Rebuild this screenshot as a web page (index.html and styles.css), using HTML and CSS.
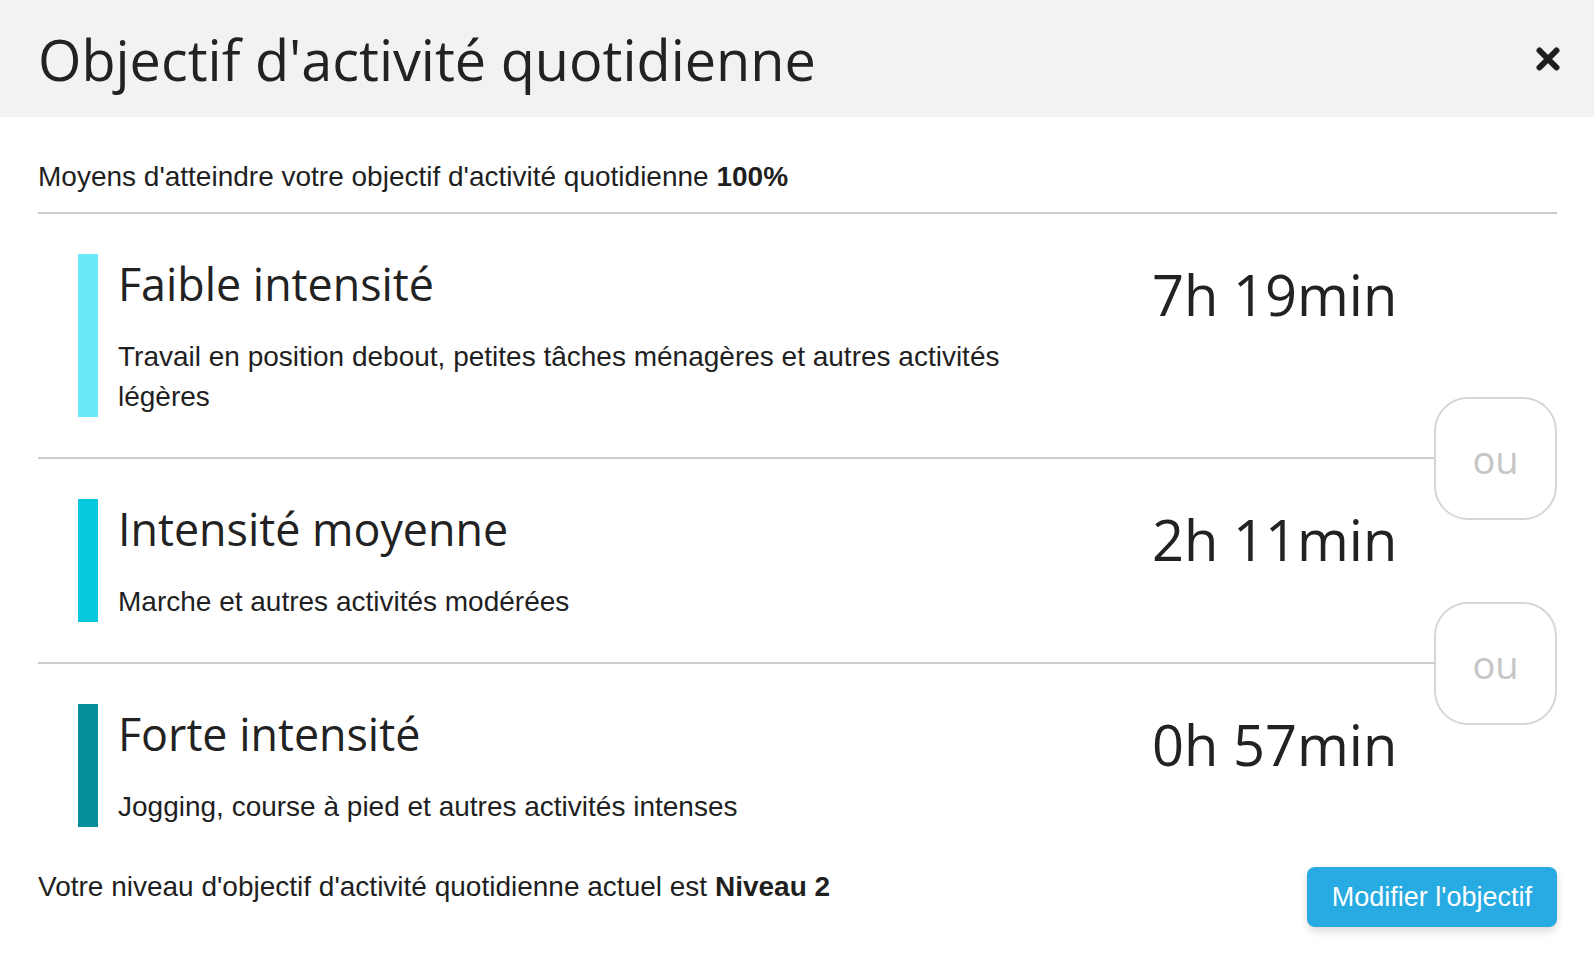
FILE: index.html
```html
<!DOCTYPE html>
<html lang="fr">
<head>
<meta charset="utf-8">
<title>Objectif d'activité quotidienne</title>
<link rel="stylesheet" href="styles.css">
</head>
<body>
<div class="modal">
  <header class="modal-header">
    <h1 class="modal-title">Objectif d'activité quotidienne</h1>
    <button class="close" aria-label="Fermer">
      <svg width="24" height="24" viewBox="0 0 24 24"><path d="M3.5 3.5 L20.5 20.5 M20.5 3.5 L3.5 20.5" stroke="#1e1e1e" stroke-width="6" stroke-linecap="round" fill="none"/></svg>
    </button>
  </header>
  <div class="modal-body">
    <p class="intro">Moyens d'atteindre votre objectif d'activité quotidienne <strong>100%</strong></p>
    <ul class="levels">
      <li class="level">
        <div class="bar bar-light"></div>
        <div class="info">
          <h2 class="level-title">Faible intensité</h2>
          <p class="level-desc">Travail en position debout, petites tâches ménagères et autres activités légères</p>
        </div>
        <div class="time">7h 19min</div>
        <span class="or">ou</span>
      </li>
      <li class="level">
        <div class="bar bar-medium"></div>
        <div class="info">
          <h2 class="level-title">Intensité moyenne</h2>
          <p class="level-desc">Marche et autres activités modérées</p>
        </div>
        <div class="time">2h 11min</div>
        <span class="or">ou</span>
      </li>
      <li class="level">
        <div class="bar bar-dark"></div>
        <div class="info">
          <h2 class="level-title">Forte intensité</h2>
          <p class="level-desc">Jogging, course à pied et autres activités intenses</p>
        </div>
        <div class="time">0h 57min</div>
      </li>
    </ul>
    <div class="footer">
      <p class="current">Votre niveau d'objectif d'activité quotidienne actuel est <strong>Niveau 2</strong></p>
      <button class="btn-primary">Modifier l'objectif</button>
    </div>
  </div>
</div>
</body>
</html>
```

FILE: styles.css
```css
* {
  box-sizing: border-box;
}

html, body {
  margin: 0;
  padding: 0;
  background: #ffffff;
}

body {
  font-family: "Liberation Sans", Arial, Helvetica, sans-serif;
  color: #1f1f1f;
}

.modal-header {
  height: 117px;
  background: #f2f2f2;
  display: flex;
  align-items: center;
  justify-content: space-between;
  padding: 0 34px 0 38px;
}

.modal-title {
  margin: 0;
  font-family: "Open Sans", "Noto Sans", sans-serif;
  font-weight: 400;
  font-size: 55.8px;
  line-height: normal;
  color: #222222;
}

.close {
  border: 0;
  background: transparent;
  padding: 0;
  width: 24px;
  height: 24px;
  display: flex;
  cursor: pointer;
}

.modal-body {
  padding: 0 37px 40px 38px;
}

.intro {
  margin: 0;
  padding: 40px 0 15px;
  font-size: 28px;
  line-height: 40px;
  border-bottom: 2px solid #cccccc;
}

.levels {
  list-style: none;
  margin: 0;
  padding: 0;
}

.level {
  position: relative;
  display: flex;
  padding: 40px 0 40px 40px;
  border-bottom: 2px solid #cccccc;
}

.level:last-child {
  border-bottom: 0;
  padding-bottom: 0;
}

.bar {
  flex: 0 0 20px;
  margin-right: 20px;
}

.bar-light {
  background: #68eafa;
}

.bar-medium {
  background: #06c9de;
}

.bar-dark {
  background: #058f9d;
}

.info {
  flex: 1 1 auto;
  min-width: 0;
}

.level-title {
  margin: 0;
  font-family: "Open Sans", "Noto Sans", sans-serif;
  font-weight: 400;
  font-size: 44.8px;
  line-height: 60px;
  color: #222222;
}

.level-desc {
  margin: 23px 0 0;
  max-width: 920px;
  font-size: 28px;
  line-height: 40px;
  color: #1f1f1f;
}

.time {
  flex: 0 0 405px;
  margin-top: 2px;
  font-family: "Open Sans", "Noto Sans", sans-serif;
  font-size: 56px;
  line-height: normal;
  color: #222222;
}

.or {
  position: absolute;
  right: 0;
  bottom: -63px;
  width: 123px;
  height: 123px;
  display: flex;
  align-items: center;
  justify-content: center;
  background: #ffffff;
  border: 2px solid #d6d6d6;
  border-radius: 34px;
  font-family: "Open Sans", "Noto Sans", sans-serif;
  font-size: 38px;
  color: #c6c6c6;
  z-index: 1;
}

.footer {
  display: flex;
  justify-content: space-between;
  align-items: flex-start;
  margin-top: 40px;
}

.current {
  margin: 0;
  font-size: 28px;
  line-height: 39px;
}

.btn-primary {
  height: 60px;
  padding: 0 25px;
  border: 0;
  border-radius: 8px;
  background: #28aae2;
  color: #ffffff;
  font-family: "Liberation Sans", Arial, Helvetica, sans-serif;
  font-size: 27px;
  box-shadow: 0 4px 8px rgba(0, 0, 0, 0.15);
  cursor: pointer;
}
```
